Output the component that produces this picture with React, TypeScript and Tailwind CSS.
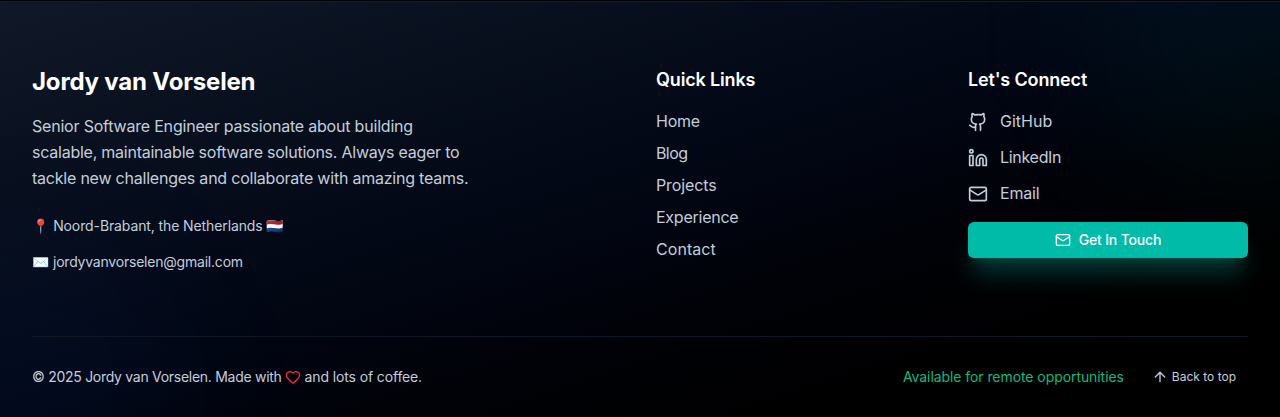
import { ArrowUp, Github, Heart, Linkedin, Mail } from "lucide-react";

const quickLinks = [
  { label: "Home", tracking: "tracking-[-0.25px]" },
  { label: "Blog", tracking: "tracking-[-0.6px]" },
  { label: "Projects", tracking: "tracking-[-0.12px]" },
  { label: "Experience", tracking: "tracking-[-0.25px]" },
  { label: "Contact", tracking: "tracking-[0.05px]" },
];
const socials = [
  { label: "GitHub", Icon: Github, tracking: "tracking-normal" },
  { label: "LinkedIn", Icon: Linkedin, tracking: "tracking-[-0.3px]" },
  { label: "Email", Icon: Mail, tracking: "tracking-[-0.2px]" },
];

export default function App() {
  return (
    <div className="h-[417px] overflow-hidden bg-[#010207] pt-px font-['Inter','Noto_Color_Emoji',sans-serif] text-[#c3cedb]">
      <footer className="relative h-[416px] overflow-hidden border-t border-[#151c2a] bg-linear-to-br from-[#111827] via-[#020613] to-black">
        <div className="absolute -bottom-32 -left-32 size-80 rounded-full bg-blue-600/4 blur-3xl" />
        <div className="absolute -top-32 -right-32 size-80 rounded-full bg-teal-500/5 blur-3xl" />
        <div className="relative px-8 pt-16">
          <div className="grid h-[222px] grid-cols-4 gap-8">
            <div className="col-span-2">
              <h3 className="mb-[15px] text-2xl font-bold tracking-[-0.18px] text-white">Jordy van Vorselen</h3>
              <p className="mb-[25px] w-[448px] leading-[26px] whitespace-nowrap">
                <span className="tracking-[-0.2px]">Senior Software Engineer passionate about building</span>
                <br />
                <span className="tracking-[-0.24px]">scalable, maintainable software solutions. Always eager to</span>
                <br />
                <span className="tracking-[-0.22px]">tackle new challenges and collaborate with amazing teams.</span>
              </p>
              <div className="space-y-4 text-sm">
                <p className="tracking-[-0.11px]">📍 Noord-Brabant, the Netherlands 🇳🇱</p>
                <p className="tracking-[-0.21px]">✉️ jordyvanvorselen@gmail.com</p>
              </div>
            </div>
            <nav>
              <h4 className="mb-[15px] text-lg font-semibold tracking-[-0.15px] text-white">Quick Links</h4>
              <ul className="space-y-2">
                {quickLinks.map(({ label, tracking }) => (
                  <li key={label} className={tracking}>{label}</li>
                ))}
              </ul>
            </nav>
            <div>
              <h4 className="mb-4 text-lg font-semibold tracking-[-0.15px] text-white">Let's Connect</h4>
              <ul className="mb-4 space-y-3">
                {socials.map(({ label, Icon, tracking }) => (
                  <li key={label} className="flex h-6 items-center gap-3">
                    <Icon size={20} />
                    <span className={`pb-0.5 ${tracking}`}>{label}</span>
                  </li>
                ))}
              </ul>
              <button className="flex h-9 w-full items-center justify-center gap-2 rounded-md bg-[#00bba7] text-sm font-medium tracking-[-0.17px] text-white shadow-[0_20px_25px_-5px_rgba(0,187,167,0.3),0_8px_10px_-6px_rgba(0,187,167,0.25)]">
                <Mail size={16} />
                Get In Touch
              </button>
            </div>
          </div>
          <div className="mt-12 flex items-center justify-between border-t border-[#0f1824] pt-6 text-sm">
            <p className="flex items-center">
              <span className="tracking-[-0.28px]">© 2025 Jordy van Vorselen. Made with</span>
              <Heart size={16} className="mr-1 ml-[3px] text-[#fb2c36]" />
              <span className="tracking-[-0.13px]">and lots of coffee.</span>
            </p>
            <div className="flex items-center gap-4">
              <span className="tracking-[-0.07px] text-[#10b981]">Available for remote opportunities</span>
              <button className="flex h-8 items-center gap-1 px-3 text-xs">
                <ArrowUp size={16} />
                Back to top
              </button>
            </div>
          </div>
        </div>
      </footer>
    </div>
  );
}
